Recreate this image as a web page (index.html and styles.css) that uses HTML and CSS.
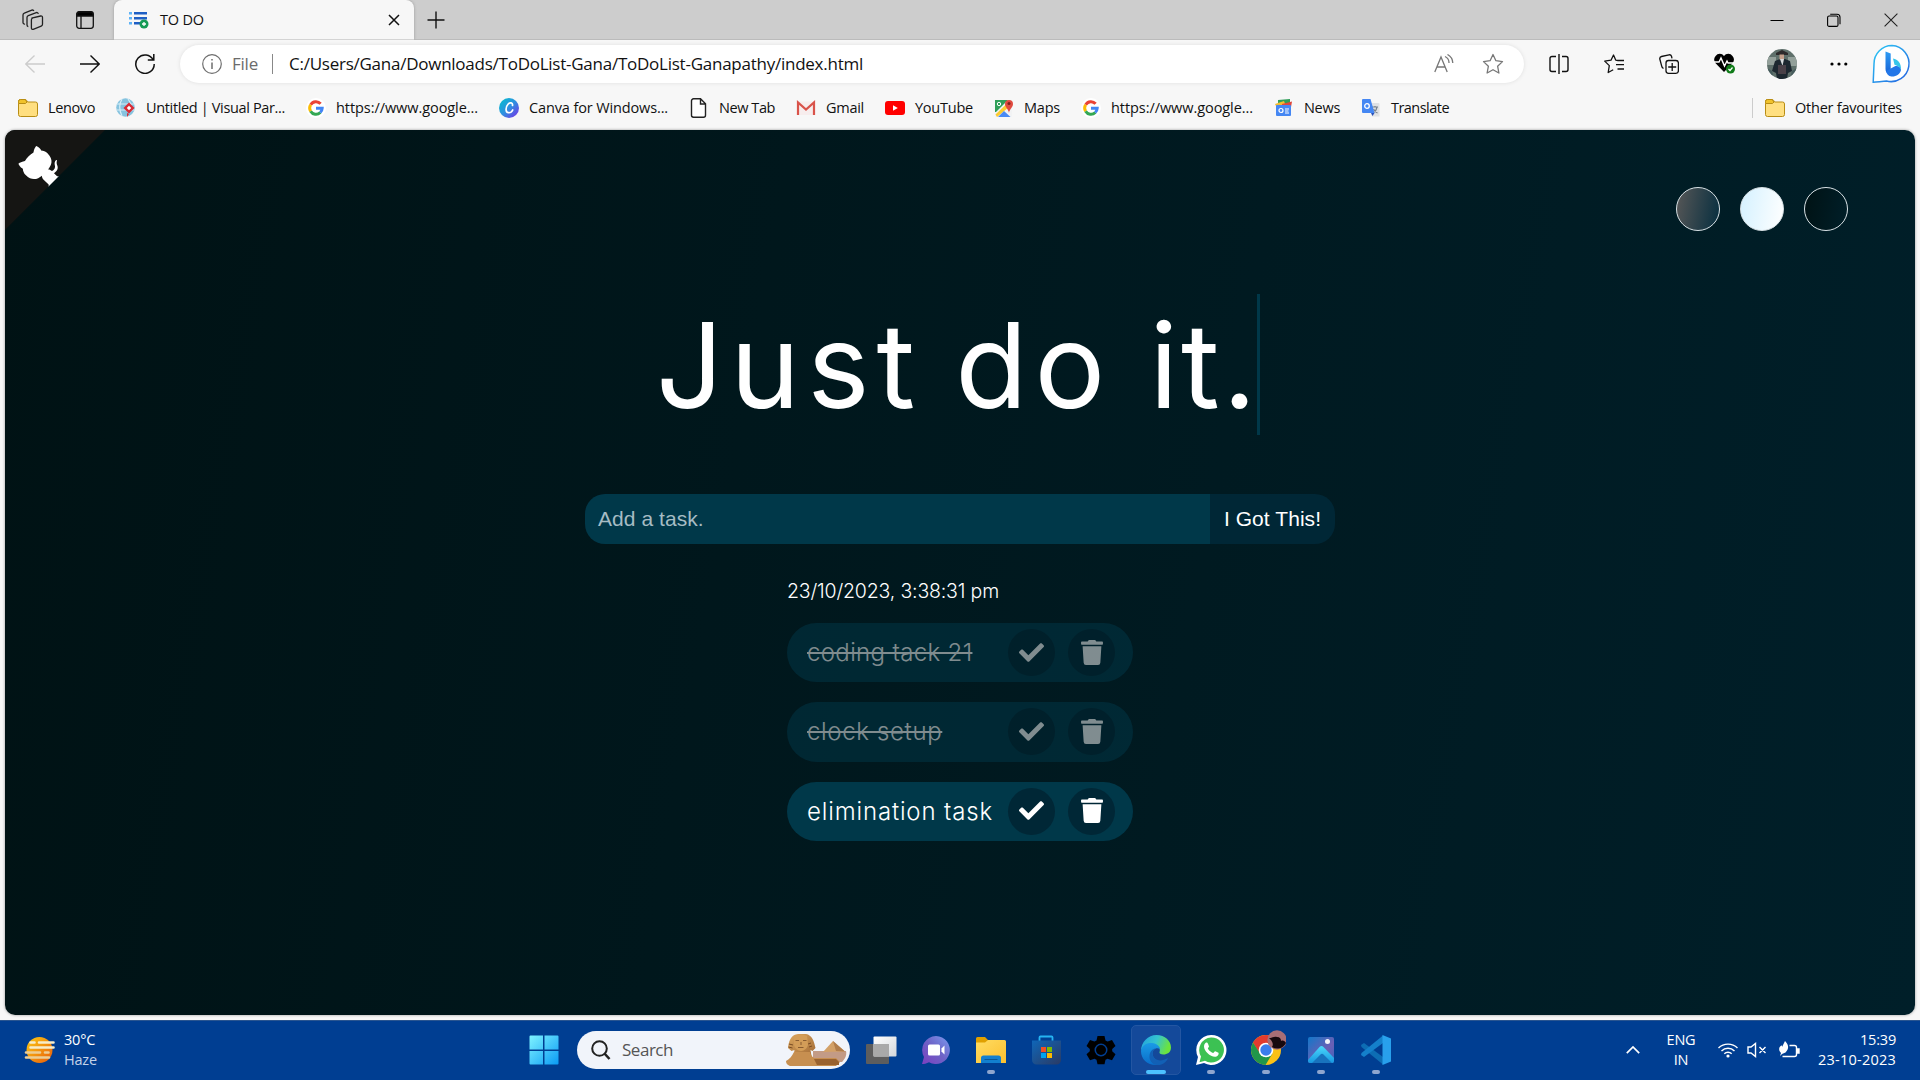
FILE: index.html
```html
<!DOCTYPE html>
<html lang="en">
<head>
<meta charset="utf-8">
<title>TO DO</title>
<link rel="stylesheet" href="styles.css">
</head>
<body>
<svg width="0" height="0" class="defs" aria-hidden="true">
  <defs>
    <linearGradient id="gWin" x1="0" y1="0" x2="1" y2="1"><stop offset="0" stop-color="#7ff3ff"/><stop offset="1" stop-color="#0a9bf5"/></linearGradient>
    <linearGradient id="gSun" x1="0" y1="0" x2="1" y2="1"><stop offset="0" stop-color="#fccb12"/><stop offset="1" stop-color="#e8590a"/></linearGradient>
    <linearGradient id="gCanva" x1="0" y1="0" x2="1" y2="1"><stop offset="0" stop-color="#00c4cc"/><stop offset=".5" stop-color="#2f8fe0"/><stop offset="1" stop-color="#7d2ae8"/></linearGradient>
    <linearGradient id="gBing" x1="0" y1="0" x2="1" y2="1"><stop offset="0" stop-color="#2ccbf5"/><stop offset="1" stop-color="#2460e0"/></linearGradient>
    <linearGradient id="gB" x1="0" y1="0" x2="0" y2="1"><stop offset="0" stop-color="#2f9cf4"/><stop offset="1" stop-color="#1763d6"/></linearGradient>
    <linearGradient id="gFold" x1="0" y1="0" x2="1" y2="1"><stop offset="0" stop-color="#ffdc62"/><stop offset="1" stop-color="#fcc02f"/></linearGradient>
    <linearGradient id="gStore" x1="0" y1="0" x2="1" y2="1"><stop offset="0" stop-color="#0f66b8"/><stop offset="1" stop-color="#2b3a63"/></linearGradient>
    <linearGradient id="gChat" x1="0" y1="1" x2="1" y2="0"><stop offset="0" stop-color="#7b3fc0"/><stop offset=".5" stop-color="#6d62c6"/><stop offset="1" stop-color="#7c9cf0"/></linearGradient>
    <linearGradient id="gEdge" x1="0" y1="0" x2="1" y2=".3"><stop offset="0" stop-color="#1f9fe0"/><stop offset=".55" stop-color="#35c4cf"/><stop offset="1" stop-color="#6be33e"/></linearGradient>
    <linearGradient id="gEdge2" x1="0" y1="0" x2="0" y2="1"><stop offset="0" stop-color="#1a9be6"/><stop offset="1" stop-color="#0a6cc9"/></linearGradient>
    <linearGradient id="gPhoto" x1="0" y1="0" x2="1" y2="1"><stop offset="0" stop-color="#1277c9"/><stop offset=".6" stop-color="#6a5fb5"/><stop offset="1" stop-color="#3c63bd"/></linearGradient>
    <linearGradient id="gHill" x1="0" y1="0" x2="0" y2="1"><stop offset="0" stop-color="#4bd8fb"/><stop offset="1" stop-color="#1696e0"/></linearGradient>
    <linearGradient id="gSph" x1="0" y1="0" x2="1" y2="1"><stop offset="0" stop-color="#dba75f"/><stop offset="1" stop-color="#a26a35"/></linearGradient>
    <linearGradient id="gWhite" x1="0" y1="0" x2="1" y2="1"><stop offset="0" stop-color="#fff"/><stop offset="1" stop-color="#d2d6da"/></linearGradient>
    <symbol id="folder" viewBox="0 0 20 20"><path d="M.5 5.500v-2a2 2 0 0 1 2-2h4.500a2 2 0 0 1 1.800 1.200L9.500 4H17.500a2 2 0 0 1 2 2v10.500a2 2 0 0 1-2 2h-15a2 2 0 0 1-2-2z" fill="#ffdf80" stroke="#b88d14"/><path d="M.5 4.500v-1a2 2 0 0 1 2-2H7l2 2.500-1.500 1.500H.6z" fill="#f0c22b" stroke="#b88d14"/></symbol>
    <symbol id="google" viewBox="0 0 20 20"><circle cx="10" cy="10" r="10" fill="#fff"/><g fill="none" stroke-width="3"><path d="M4.700 6.700A6.200 6.200 0 0 1 14.600 5.800" stroke="#ea4335"/><path d="M4.600 13.200a6.200 6.200 0 0 1 0-6.400" stroke="#fbbc05"/><path d="M14.300 14.500A6.200 6.200 0 0 1 4.600 13.200" stroke="#34a853"/><path d="M10 10.200h6.200a6.200 6.200 0 0 1-2 4.300" stroke="#4285f4"/></g></symbol>
    <symbol id="check" viewBox="0 0 512 512"><path fill="#fff" d="M173.898 439.404l-166.400-166.400c-9.997-9.997-9.997-26.206 0-36.204l36.203-36.204c9.997-9.998 26.207-9.998 36.204 0L192 312.690 432.095 72.596c9.997-9.997 26.207-9.997 36.204 0l36.203 36.204c9.997 9.997 9.997 26.206 0 36.204l-294.400 294.401c-9.998 9.997-26.207 9.997-36.204-.001z"/></symbol>
    <symbol id="trash" viewBox="0 0 448 512"><path fill="#fff" d="M432 32H312l-9.400-18.700A24 24 0 0 0 281.100 0H166.800a23.720 23.720 0 0 0-21.400 13.300L136 32H16A16 16 0 0 0 0 48v32a16 16 0 0 0 16 16h416a16 16 0 0 0 16-16V48a16 16 0 0 0-16-16zM53.200 467a48 48 0 0 0 47.900 45h245.800a48 48 0 0 0 47.900-45L416 128H32z"/></symbol>
  </defs>
</svg>

<div class="screen">
  <header class="tabstrip">
    <svg class="workspaces" width="22" height="22" viewBox="0 0 22 22" fill="none" stroke="#222" stroke-width="1.300"><path d="M9.500 9.200l9.200-2.200a1.500 1.500 0 0 1 1.800 1.500v6.800a2 2 0 0 1-1.300 1.800l-8 3.200a1.300 1.300 0 0 1-1.800-1.200v-8a2 2 0 0 1 .9-1.900z"/><path d="M6.300 17.600a1.500 1.500 0 0 1-1.300-1.500V8.500a2 2 0 0 1 1.300-1.900l8-3a1.500 1.500 0 0 1 2 1.200"/><path d="M3 15a1.500 1.500 0 0 1-2-1.400V6a2 2 0 0 1 1.300-1.900l7.500-3a1.500 1.500 0 0 1 2 .9"/></svg>
    <svg class="tabmenu" width="18" height="18" viewBox="0 0 18 18" fill="none" stroke="#111" stroke-width="1.300"><rect x=".7" y=".7" width="16.600" height="16.600" rx="2.500"/><path d="M1 3a2.300 2.300 0 0 1 2-2h12a2.300 2.300 0 0 1 2 2v2H1z" fill="#000"/><path d="M5 5v12"/></svg>
    <div class="tab">
      <svg width="20" height="18" viewBox="0 0 20 18"><g fill="#1f5fc4"><rect x="5" y="1" width="13" height="2.500"/><rect x="5" y="6" width="13" height="2.500"/><rect x="5" y="11" width="7" height="2.500"/></g><g fill="#5cb2f7"><rect x="0" y="1" width="3" height="2.500"/><rect x="0" y="6" width="3" height="2.500"/><rect x="0" y="11" width="3" height="2.500"/></g><circle cx="15" cy="13" r="4.500" fill="#169b56"/><path d="M15 11v4M13 13h4" stroke="#fff" stroke-width="1.300"/></svg>
      <span class="tab-title">TO DO</span>
      <svg class="tab-close" width="12" height="12" viewBox="0 0 12 12" stroke="#111" stroke-width="1.500"><path d="M1 1l10 10M11 1L1 11"/></svg>
    </div>
    <svg class="newtab" width="18" height="18" viewBox="0 0 18 18" stroke="#111" stroke-width="1.400"><path d="M9 .5v17M.5 9h17"/></svg>
    <div class="winctl">
      <svg width="14" height="14" viewBox="0 0 14 14" stroke="#000"><path d="M.5 7.500h13"/></svg>
      <svg width="14" height="14" viewBox="0 0 14 14" fill="none" stroke="#000" stroke-width="1.100"><rect x=".6" y="3" width="10.400" height="10.400" rx="1.500"/><path d="M3.200 1.200h6.800a3 3 0 0 1 3 3v7"/></svg>
      <svg width="14" height="14" viewBox="0 0 14 14" stroke="#222" stroke-width="1.100"><path d="M.6.6l12.800 12.800M13.400.6L.6 13.400"/></svg>
    </div>
  </header>

  <div class="toolbar">
    <svg class="nav" width="20" height="20" viewBox="0 0 20 20" fill="none" stroke="#ccc" stroke-width="1.300"><path d="M20 10H.8M9.500 1.500L.8 10l8.700 8.500"/></svg>
    <svg class="nav" width="20" height="20" viewBox="0 0 20 20" fill="none" stroke="#111" stroke-width="1.400"><path d="M0 10h19.200M10.500 1.500l8.700 8.500-8.700 8.500"/></svg>
    <svg class="nav" width="20" height="20" viewBox="0 0 20 20" fill="none" stroke="#111" stroke-width="1.500"><path d="M18.200 6A9.200 9.200 0 1 0 19.200 10M18.800 0v6h-6"/></svg>
    <div class="address">
      <svg width="20" height="20" viewBox="0 0 20 20" fill="none" stroke="#6e6e6e" stroke-width="1.200"><circle cx="10" cy="10" r="9.300"/><path d="M10 8.500v6.500M10 5v1.600" stroke-width="1.500"/></svg>
      <span class="file">File</span>
      <i class="bar"></i>
      <span class="url">C:/Users/Gana/Downloads/ToDoList-Gana/ToDoList-Ganapathy/index.html</span>
      <svg class="aloud" width="20" height="20" viewBox="0 0 20 20" fill="none" stroke="#777" stroke-width="1.300"><path d="M.8 18L7 3l6.200 15M3 13h8"/><path d="M11 2.500a7 7 0 0 1 4 6.500M13.500.5A10 10 0 0 1 18.800 9"/></svg>
      <svg class="star" width="22" height="22" viewBox="0 0 22 22" fill="none" stroke="#777" stroke-width="1.300" stroke-linejoin="round"><path d="M11 1.500l2.900 6.200 6.600.9-4.900 4.600 1.300 6.800L11 16.700 5.100 20l1.300-6.800L1.500 8.600l6.600-.9z"/></svg>
    </div>
    <div class="actions">
      <svg width="20" height="20" viewBox="0 0 20 20" fill="none" stroke="#111" stroke-width="1.400"><path d="M7 2.500H3a2 2 0 0 0-2 2v11a2 2 0 0 0 2 2h4M13 2.500h4a2 2 0 0 1 2 2v11a2 2 0 0 1-2 2h-4M10 0v20"/></svg>
      <svg width="20" height="20" viewBox="0 0 20 20" fill="none" stroke="#111" stroke-width="1.300" stroke-linejoin="round"><path d="M14 6.500l-2.300-.4L9.500 1 7 6.200l-6.300.9 4.600 4.500L4.200 18.500l5-2.700M13.500 6.500H20M12 10.700h8M13.500 15H20"/></svg>
      <svg width="20" height="20" viewBox="0 0 20 20" fill="none" stroke="#111" stroke-width="1.300"><rect x="7" y="6.500" width="12.400" height="12.800" rx="2.500"/><path d="M13.200 9v8M9.200 13h8M4.500 14.500a3 3 0 0 1-1.800-2.300L.8 5a2.200 2.200 0 0 1 1.700-2.500L10 .8a2.200 2.200 0 0 1 2.500 1.500l.5 2"/></svg>
      <svg width="21" height="21" viewBox="0 0 21 21"><path d="M10 19L1.600 10.200a5.300 5.300 0 0 1 0-7.300A5.200 5.200 0 0 1 10 3a5.200 5.200 0 0 1 8.500-.1 5.300 5.300 0 0 1 0 7.300z" fill="#000"/><path d="M0 9h5l2-4 3.500 8 2.500-5 1 2h6" fill="none" stroke="#fff" stroke-width="1.400"/><circle cx="16.500" cy="16" r="4.500" fill="#0f7b18"/><path d="M14.500 16l1.500 1.500 2.500-3" fill="none" stroke="#fff" stroke-width="1.200"/></svg>
      <svg class="avatar" width="30" height="30" viewBox="0 0 30 30"><clipPath id="av"><circle cx="15" cy="15" r="15"/></clipPath><g clip-path="url(#av)"><path fill="#5f706b" d="M0 0h30v30H0z"/><path fill="#93a09a" d="M0 8h9v8H0zM21 8h9v9h-9z"/><path fill="#1d2830" d="M8 12l5-2h5l5 2 2 10-4 2-1 6H10l-1-6-4-2z"/><path fill="#2c2a2b" d="M9 4l6-3 6 3v2H9z"/><path fill="#c3a08c" d="M12.500 5.500h4.500v5h-4.500z"/><path fill="#d6dadb" d="M13 10h4l-1.500 7z"/><path fill="#4a4148" d="M11 16h8v9h-8z"/><path fill="#465c5d" d="M0 19l5 3 2 8H0zM30 19l-5 3-2 8h7z"/></g></svg>
      <svg class="dots" width="18" height="4" viewBox="0 0 18 4"><circle cx="2" cy="2" r="1.600"/><circle cx="9" cy="2" r="1.600"/><circle cx="15.800" cy="2" r="1.600"/></svg>
      <svg class="bing" width="40" height="40" viewBox="0 0 40 40"><path d="M20 1.600A18 18 0 1 1 14.500 37C11 37.400 5 37.800 1.200 38.200L2 20A18 18 0 0 1 20 1.600z" fill="#fff" stroke="url(#gBing)" stroke-width="1.500"/><path d="M13.500 7.500l5.200 2v15.500l-2.200 4.500c-2-.5-3-2-3-4.500z" fill="url(#gB)"/><path d="M14 27l8.500-4.500c3-1.200 6.500.5 6.500 3.500-.5 4-5.500 7-9.500 6.500-3-.3-5-2.500-5.500-5.500z" fill="#2377e8"/><path d="M21 14.500c5 1 8.300 4.500 8 11-1.500-3.500-5-4-6.500-4.800z" fill="#37c6ea"/></svg>
    </div>
  </div>

  <nav class="bookmarks">
    <a class="b-lenovo"><svg width="20" height="20"><use href="#folder"/></svg><span>Lenovo</span></a>
    <a class="b-visual"><svg width="20" height="20" viewBox="0 0 20 20"><circle cx="9.500" cy="9.500" r="9.300" fill="#86c3df"/><path d="M1 6h17M1 12h17M6 1c-3 5-3 11 0 17M12 1c3 4 4 8 3 12" stroke="#d7eef7" fill="none" stroke-width="1.200"/><path d="M13 4.500l5.500 5.500L13 15.500 7.500 10z" fill="#d92b35"/><path d="M13 7.800l2.200 2.200-2.200 2.200-2.200-2.200z" fill="#fff"/><path d="M11 19v-4l2 1" fill="#d92b35"/></svg><span>Untitled | Visual Par...</span></a>
    <a class="b-google"><svg width="20" height="20"><use href="#google"/></svg><span>https://www.google...</span></a>
    <a class="b-canva"><svg width="20" height="20" viewBox="0 0 20 20"><circle cx="10" cy="10" r="10" fill="url(#gCanva)"/><path d="M13.500 7.500c.5-3-2.500-3.500-4.500-1.200-2.500 2.800-2.800 8 .5 8.400 1.800.2 3.500-1.200 4.200-2.700" fill="none" stroke="#fff" stroke-width="1.700" stroke-linecap="round"/></svg><span>Canva for Windows...</span></a>
    <a class="b-newtab"><svg width="20" height="20" viewBox="0 0 20 20" fill="#fff" stroke="#222" stroke-width="1.400"><path d="M4.500.8h7l5 5v11.400a2 2 0 0 1-2 2h-10a2 2 0 0 1-2-2V2.800a2 2 0 0 1 2-2zM11.500 1v5h5"/></svg><span>New Tab</span></a>
    <a class="b-gmail"><svg width="20" height="20" viewBox="0 0 20 20"><path d="M1 3.500h18V17H1z" fill="#f7eded"/><path d="M2 17V4.500l8 7 8-7V17" fill="none" stroke="#d9534a" stroke-width="2.200"/></svg><span>Gmail</span></a>
    <a class="b-youtube"><svg width="20" height="20" viewBox="0 0 20 20"><rect y="3" width="20" height="14" rx="3" fill="#f00"/><path d="M8 7.300v5.400l4.800-2.700z" fill="#fff"/></svg><span>YouTube</span></a>
    <a class="b-maps"><svg width="20" height="20" viewBox="0 0 20 20"><rect x="1" y="2" width="17" height="17" rx="1.500" fill="#f2f3f4"/><path d="M1 2h13L2 14H1z" fill="#2f9e58"/><path d="M1.500 16.500L15 3.500l3 3L3 19z" fill="#fccb30"/><path d="M4 19l6-6 6.500 6z" fill="#4a8af4"/><path d="M15 15c-.5-4-4-5.500-4-9a4 4 0 0 1 8 0c0 3.500-3.500 5-4 9z" fill="#e04a3f"/><circle cx="15" cy="5.500" r="1.500" fill="#7d211b"/><circle cx="5" cy="6" r="1.700" fill="none" stroke="#fff"/></svg><span>Maps</span></a>
    <a class="b-google"><svg width="20" height="20"><use href="#google"/></svg><span>https://www.google...</span></a>
    <a class="b-news"><svg width="20" height="20" viewBox="0 0 20 20"><path d="M4 2l12-1v6H4z" fill="#2f9e58"/><path d="M1 6l9-3 2 5H2z" fill="#f4bc30"/><path d="M8 6l10-2.500L17 9H8z" fill="#e0483c"/><rect x="2" y="7" width="15" height="11" rx="1" fill="#4587f3"/><circle cx="7" cy="12.500" r="2" fill="none" stroke="#fff" stroke-width="1.200"/><path d="M11 11h4M11 13h3.500M11 15h4" stroke="#fff"/></svg><span>News</span></a>
    <a class="b-translate"><svg width="20" height="20" viewBox="0 0 20 20"><path d="M8 5h9.500a1 1 0 0 1 1 1v12.500H11z" fill="#dfe1e4"/><path d="M11 9h6M14 8v1.500M12 15c2-1 3.500-3 4-6M12.500 11c1 2 2.500 3.500 4 4" stroke="#76818b" fill="none" stroke-width="1.200"/><path d="M2 1h7.500l4 14H2a1 1 0 0 1-1-1V2a1 1 0 0 1 1-1z" fill="#4587f3"/><circle cx="6" cy="8" r="2.300" fill="none" stroke="#fff" stroke-width="1.300"/><path d="M10 15h3.500L11.500 18z" fill="#2850b8"/></svg><span>Translate</span></a>
    <a class="other"><svg width="20" height="20"><use href="#folder"/></svg><span>Other favourites</span></a>
  </nav>

  <main class="page">
    <svg class="corner" width="100" height="100" viewBox="0 0 250 250"><path fill="#151513" d="M0,0 L115,115 L130,115 L142,142 L250,250 L250,0 Z"/><path fill="#fff" d="M128.300,109.000 C113.800,99.700 119.000,89.600 119.000,89.600 C122.000,82.700 120.500,78.600 120.500,78.600 C119.200,72.000 123.400,76.300 123.400,76.300 C127.300,80.900 125.500,87.300 125.500,87.300 C122.900,97.600 130.600,101.900 134.400,103.200"/><path fill="#fff" d="M115.000,115.000 C114.900,115.100 118.700,116.500 119.800,115.400 L133.700,101.600 C136.900,99.200 139.900,98.400 142.200,98.600 C133.800,88.000 127.500,74.400 143.800,58.000 C148.500,53.400 154.000,51.200 159.700,51.000 C160.300,49.400 163.200,43.600 171.400,40.100 C171.400,40.100 176.100,42.500 178.800,56.200 C183.100,58.600 187.200,61.800 190.900,65.400 C194.500,69.000 197.700,73.200 200.100,77.600 C213.800,80.200 216.300,84.900 216.300,84.900 C212.700,93.100 206.900,96.000 205.400,96.600 C205.100,102.400 203.000,107.800 198.300,112.500 C181.900,128.900 168.300,122.500 157.700,114.100 C157.900,116.900 156.700,120.900 152.700,124.900 L141.000,136.500 C139.800,137.700 141.600,141.900 141.800,141.800 Z"/></svg>
    <div class="themes"><i class="standard"></i><i class="light"></i><i class="darker"></i></div>
    <h1 class="title"><span class="wide">Just</span> <span class="wide second">do</span> <span class="narrow">it.</span></h1>
    <form class="entry"><span class="field">Add a task.</span><span class="submit">I Got This!</span></form>
    <section class="list">
      <p class="stamp">23/10/2023, 3:38:31 pm</p>
      <div class="todo done"><span class="name n1"><span>coding tack 21</span></span><b><svg width="25" height="25"><use href="#check"/></svg></b><b><svg width="22" height="25"><use href="#trash"/></svg></b></div>
      <div class="todo done"><span class="name n2"><span>clock setup</span></span><b><svg width="25" height="25"><use href="#check"/></svg></b><b><svg width="22" height="25"><use href="#trash"/></svg></b></div>
      <div class="todo"><span class="name n3"><span>elimination task</span></span><b><svg width="25" height="25"><use href="#check"/></svg></b><b><svg width="22" height="25"><use href="#trash"/></svg></b></div>
    </section>
  </main>

  <footer class="taskbar">
    <div class="weather">
      <svg width="32" height="28" viewBox="0 0 32 28"><circle cx="15.500" cy="14" r="13" fill="url(#gSun)"/><g stroke-width="2.600" stroke-linecap="round"><path d="M6.500 6.500h4M15 6.500h14.500M6.500 11.500h23" stroke="#f8edc8"/><path d="M2 16.500h14M21 16.500h3.500M2 21.500h23" stroke="#eccd94"/></g></svg>
      <div><span>30°C</span><span class="haze">Haze</span></div>
    </div>
    <div class="apps">
      <b><svg width="30" height="30" viewBox="0 0 30 30"><path fill="url(#gWin)" d="M1.500.5H14v14H.500v-13a1 1 0 0 1 1-1zM15.500.5h13a1 1 0 0 1 1 1v13h-14zM.5 16H14v13.500H1.500a1 1 0 0 1-1-1zM15.500 16h14v12.500a1 1 0 0 1-1 1h-13z"/></svg></b>
      <div class="search">
        <svg width="20" height="20" viewBox="0 0 20 20" fill="none" stroke="#222" stroke-width="2"><circle cx="8.500" cy="8.500" r="7.300"/><path d="M13.500 13.500l5 5.500" stroke-width="2.600"/></svg>
        <span>Search</span>
        <svg class="sphinx" width="62" height="34" viewBox="0 0 62 34"><path d="M28 18h33c1 4-1 8-4 11H28z" fill="#c39b86"/><path d="M38 19L48 8l12 10.500z" fill="#d3a168"/><path d="M48 8l12 10.500-9-.5z" fill="#b07d4c"/><path d="M3 15C4 5 8 1 14 1h7c6 1 8 7 9.500 14l-3 3-2-1 1 6h-18l1-6-3 1z" fill="url(#gSph)"/><path d="M9 3c3-2 10-2 13 0l1 8c0 4-4 7-7 7s-7-3-7-7z" fill="#d39d58"/><path d="M10.500 7.500h3.500M18 7.500h3.500M16 9v3M13 14.500h5.500" stroke="#8a5c30"/><path d="M4 11l4 1M3.500 14l4 1M26 10l-3 1M27 13l-3 1" stroke="#7a4d24"/><path d="M1 28c4-2 6-5 8-9h16c1 3 2 5 4 6h22l4 4-4 4H5c-3-1-4-3-4-5z" fill="#c78f50"/><path d="M29 26h22l3 3v3H32z" fill="#99622f"/></svg>
      </div>
      <b><svg width="32" height="32" viewBox="0 0 32 32"><rect x="1" y="10" width="23" height="20" rx="1" fill="#5d5d5d"/><rect x="8.500" y="2.500" width="23" height="20" rx="1" fill="url(#gWhite)"/><path d="M8.500 10H24v12.500H8.500z" fill="#a9a9a9"/></svg></b>
      <b><svg width="30" height="30" viewBox="0 0 30 30"><path d="M15 1a14 14 0 1 1-7 26.200C5.500 28.500 3 29 1 29l2-7A14 14 0 0 1 15 1z" fill="url(#gChat)"/><rect x="7" y="9.500" width="12" height="11" rx="1.500" fill="#fff"/><path d="M20.500 13.500l3-3v9l-3-3z" fill="#fff"/></svg></b>
      <b class="run"><svg width="30" height="28" viewBox="0 0 30 28"><path d="M0 6V2.500A1.500 1.500 0 0 1 1.500 1H9l3 3v4H0z" fill="#e0a000"/><path d="M0 6.500h9l3-2.500h16.500A1.500 1.500 0 0 1 30 5.500V27H0z" fill="url(#gFold)"/><path d="M5 27v-5a2.500 2.500 0 0 1 2.500-2.500h15A2.500 2.500 0 0 1 25 22v5z" fill="#127fcf"/><path d="M8.500 23.500h13" stroke="#0a5796"/></svg></b>
      <b><svg width="30" height="30" viewBox="0 0 30 30"><path d="M8.500 7V2.500a1 1 0 0 1 1-1h11a1 1 0 0 1 1 1V7" fill="none" stroke="#25b3f2" stroke-width="1.800"/><path d="M1 5.500h29V25a4.500 4.500 0 0 1-4.500 4.500h-20A4.500 4.500 0 0 1 1 25z" fill="url(#gStore)"/><path d="M10 12h5v5h-5z" fill="#f25022"/><path d="M16 12h5v5h-5z" fill="#7fba00"/><path d="M10 18h5v5h-5z" fill="#00a4ef"/><path d="M16 18h5v5h-5z" fill="#ffb900"/></svg></b>
      <b><svg width="30" height="30" viewBox="0 0 30 30"><path fill-rule="evenodd" d="M11.500 1h7l1 4.500 2 1L26 5l3.500 6-3.300 3v2.200l3.300 3-3.500 6-4.500-1.500-2 1-1 4.500h-7l-1-4.500-2-1L4 25.200.5 19.200l3.300-3V14L.5 11 4 5l4.500 1.500 2-1zM15 8.500a6.500 6.500 0 1 0 0 13 6.500 6.500 0 0 0 0-13z"/><circle cx="15" cy="15" r="5"/></svg></b>
      <b class="run active"><svg width="32" height="32" viewBox="0 0 32 32"><path d="M1 17C1 8 8 1 16.500 1S31 7 31 13.500c0 5-4 7-7.500 7-3 0-4.500-1.200-4-2.500 1.300-2.500-.5-6.500-6-7.500C8 9.500 3 12 1 17z" fill="url(#gEdge)"/><path d="M1 17c1-6 6-8.500 11-8 5 .5 8 3.500 8 6-4-2-8 1-7.500 5 .5 5 6 9.500 13.500 6-3 4-7 5-10 5C7 31 1 25 1 17z" fill="url(#gEdge2)"/><path d="M12.500 19.500c.5 6 7 9.500 15.500 4.500-1 3.500-5 7-10 7-6 0-9-5-8.500-9 .2-4 2.500-7 6-7.500-2.500 1-3 3-3 5z" fill="#1260b5"/></svg></b>
      <b class="run"><svg width="32" height="32" viewBox="0 0 32 32"><path d="M16 1a15 15 0 1 1-7 28l-8 2 2-8A15 15 0 0 1 16 1z" fill="#fff"/><path d="M16 3.500a12.500 12.500 0 1 1-6 23.200l-5.500 1.500L6 22.500A12.500 12.500 0 0 1 16 3.500z" fill="#3cc153"/><path d="M10 9.500c1-1.500 2.500-1 3 .3l1 2.700c-.3 1-1.500 1.500-1 2.300 1 2 3 3.500 5 4.200 1-.2 1.500-2 2.300-1.800l3.200 1.600c.5 1-.2 3.200-2 3.700-5 1.500-12.500-5-12.500-10 0-1.200.3-2.200 1-3z" fill="#fff"/></svg></b>
      <b class="run"><svg width="40" height="40" viewBox="0 0 40 40"><circle cx="20" cy="20" r="15" fill="#fbc116"/><path d="M7 12.500A15 15 0 0 1 33 12.500L20 13.500l-6.500 10z" fill="#e33b2e"/><path d="M7 12.500A15 15 0 0 0 19.500 35l7-11.500L14 23.500z" fill="#21964a"/><circle cx="20" cy="20" r="7.300" fill="#fff"/><circle cx="20" cy="20" r="5.700" fill="#3b7ded"/><circle cx="31" cy="10" r="9.700" fill="#a86e76"/><path d="M23 8c3 0 5-2 8-1 3 0 4 2 4 4 2-1 4 0 5 2a9.700 9.700 0 0 1-14 4c2-3 0-6-3-9z" fill="#17090f"/></svg></b>
      <b class="run"><svg width="28" height="28" viewBox="0 0 28 28"><rect x="1" y="1" width="26" height="26" rx="2" fill="url(#gPhoto)"/><path d="M1 24l11.500-13a3 3 0 0 1 4 0L27 22v3a2 2 0 0 1-2 2H3a2 2 0 0 1-2-2z" fill="url(#gHill)"/><path d="M5 27l8.500-8.500a2 2 0 0 1 3 0L25 27z" fill="#1873be"/><circle cx="20.500" cy="5.500" r="2.500" fill="#f2f4fa"/></svg></b>
      <b class="run"><svg width="32" height="32" viewBox="0 0 32 32"><path d="M1 11l3-2 19 14v7.500L1.500 13z" fill="#0d6db4"/><path d="M1 21l3 2L23 9V1.500L1.500 19z" fill="#1480cb"/><path d="M22.500 1L31 4.500v23L22.500 31z" fill="#28a0ec"/></svg></b>
    </div>
    <div class="tray">
      <svg class="chev" width="14" height="8" viewBox="0 0 14 8" fill="none" stroke="#fff" stroke-width="1.700"><path d="M.8 7.200L7 1l6.200 6.200"/></svg>
      <div class="lang"><span>ENG</span><span>IN</span></div>
      <svg width="20" height="16" viewBox="0 0 20 16" fill="none" stroke="#fff" stroke-width="1.400"><path d="M.5 6a13.500 13.500 0 0 1 19 0M3.500 9a9.200 9.200 0 0 1 13 0M6.300 11.800a5.200 5.200 0 0 1 7.400 0"/><circle cx="10" cy="14" r="1.600" fill="#fff" stroke="none"/></svg>
      <svg class="mute" width="20" height="16" viewBox="0 0 20 16" fill="none" stroke="#fff" stroke-width="1.400"><path d="M1 5h3L8.500 1.500v13L4 11H1zM12.500 5l6 6M18.500 5l-6 6"/></svg>
      <svg class="batt" width="22" height="18" viewBox="0 0 22 18" fill="none" stroke="#fff" stroke-width="1.400"><path d="M11.500 4.500h5A2 2 0 0 1 18.500 6.500v7a2 2 0 0 1-2 2h-12"/><path d="M19.500 8h1.500v4h-1.500z" fill="#fff"/><path d="M7 0c3 3 5 7 .5 11.500L4 13l-2 2 1-3C0 9 1 5 4 4.500V6z" fill="#fff" stroke="none"/></svg>
      <div class="clock"><span>15:39</span><span class="date">23-10-2023</span></div>
    </div>
  </footer>
</div>
</body>
</html>
```
FILE: styles.css
```css
* { box-sizing: border-box; }
body { margin: 0; overflow: hidden; font-family: "Open Sans", "Noto Sans", sans-serif; white-space: nowrap; }
.defs { position: absolute; }
svg { display: block; flex: none; }
.screen { display: flex; flex-direction: column; width: 1920px; height: 1080px; background: #f7f7f7; }

/* browser chrome */
.tabstrip { display: flex; align-items: center; height: 40px; background: #cdcdcd; border-bottom: 1px solid #bbb; }
.workspaces { margin-left: 22px; }
.tabmenu { margin-left: 32px; }
.tab { display: flex; align-items: center; width: 300px; height: 40px; margin: 0 13px 0 20px; padding: 0 14px 0 15px; background: #f7f7f7; border-radius: 8px 8px 0 0; box-shadow: 0 0 3px #999; clip-path: inset(0 -3px 0 -3px); }
.tab-title { margin-left: 11px; font-size: 14.500px; letter-spacing: -.17px; color: #111; }
.tab-close { margin-left: auto; }
.winctl { display: flex; gap: 43px; margin: 0 22px 0 auto; }

.toolbar { display: flex; align-items: center; height: 47px; padding: 0 8px 0 25px; }
.nav { margin-right: 35px; }
.address { display: flex; align-items: center; width: 1346px; height: 38px; margin-left: -10px; padding: 0 20px 0 22px; background: #fff; border-radius: 19px; box-shadow: 0 0 4px rgba(0,0,0,.1); }
.file { margin-left: 10px; font-size: 17px; letter-spacing: -.23px; color: #6b6b6b; }
.bar { width: 1px; height: 20px; margin: 0 16px 0 14px; background: #888; }
.url { font-size: 17px; letter-spacing: -.248px; color: #111; }
.aloud { margin-left: auto; }
.star { margin-left: 28px; }
.actions { display: flex; align-items: center; gap: 35px; margin-left: 25px; }
.avatar { margin-left: -3px; }
.dots { margin-left: -2px; }
.bing { margin-left: -11px; }

.bookmarks { display: flex; align-items: center; gap: 21px; height: 43px; padding: 0 18px 1px; font-size: 14.500px; color: #111; }
.bookmarks a { display: flex; align-items: center; gap: 10px; }
.bookmarks span { padding-bottom: 1px; }
.bookmarks .other { margin-left: auto; padding-left: 12px; border-left: 1px solid #ccc; letter-spacing: -.236px; }
.b-lenovo { letter-spacing: -.383px; }
.b-visual { letter-spacing: -.348px; }
.b-google { letter-spacing: -.067px; }
.b-canva { letter-spacing: -.128px; }
.b-newtab { letter-spacing: -.426px; }
.b-gmail { letter-spacing: -.272px; }
.b-youtube { letter-spacing: -.232px; }
.b-maps { letter-spacing: -.223px; }
.b-news { letter-spacing: -.305px; }
.b-translate { letter-spacing: -.535px; }

/* to-do page */
.page { position: relative; display: flex; flex-direction: column; align-items: center; height: 885px; margin: 0 5px; overflow: hidden; border-radius: 10px; background: linear-gradient(100deg, #001214, #001f29); box-shadow: 0 0 3px rgba(0,0,0,.4); color: #fff; font-family: Inter, sans-serif; }
.corner { position: absolute; left: 0; top: 0; transform: scaleX(-1); }
.themes { display: flex; align-self: flex-end; gap: 20px; margin: 57px 67px 0 0; }
.themes i { width: 44px; height: 44px; border: 1px solid #d9e2e6; border-radius: 50%; }
.standard { background: linear-gradient(100deg, #575757, #062e3f); }
.light { background: linear-gradient(100deg, #d4f1ff, #fff); }
.darker { background: linear-gradient(100deg, #001214, #001f29); }
.title { width: 600px; height: 141px; margin: 63px 0 0; border-right: 3px solid #003849; font-size: 118px; font-weight: 400; line-height: 143px; text-indent: -4px; }
.wide { letter-spacing: 7px; }
.second { margin-right: 4px; }
.narrow { letter-spacing: 3px; }
.entry { display: flex; width: 750px; height: 50px; margin: 59px 0 0; border-radius: 20px; overflow: hidden; font: 21px/50px "Liberation Sans", sans-serif; letter-spacing: .06px; }
.field { width: 625px; padding-left: 13px; background: #003849; color: #a6bcc4; }
.submit { flex: 1; background: #002736; text-align: center; }
.list { width: 346px; }
.stamp { height: 60px; margin: 19px 0 0; font-size: 19.500px; font-weight: 300; letter-spacing: -.169px; line-height: 57px; }
.todo { display: flex; align-items: center; height: 59.200px; margin-bottom: 20.200px; padding: 0 18px 0 20px; border-radius: 30px; background: #003849; font-size: 24px; font-weight: 300; }
.todo b { display: flex; align-items: center; justify-content: center; width: 47px; height: 47px; padding-bottom: 1px; border-radius: 50%; background: #002736; }
.todo b + b { margin-left: 13px; }
.name { flex: none; width: 201px; }
.n1 { letter-spacing: .35px; }
.n2 { letter-spacing: .65px; }
.n3 { letter-spacing: .85px; }
.done { opacity: .5; }
.done .name span { text-decoration: line-through 2px; }

/* taskbar */
.taskbar { display: flex; height: 60px; margin-top: 5px; padding-bottom: 1px; background: #003e92; border-top: 1px solid #2a5590; color: #fff; font-size: 14.500px; line-height: 20px; letter-spacing: -.2px; }
.weather { display: flex; align-items: center; width: 519px; padding-left: 24px; gap: 8px; }
.weather div { display: flex; flex-direction: column; align-items: flex-start; padding-bottom: 1px; }
.haze { color: #c3d2e8; }
.apps { display: flex; align-items: center; gap: 5px; }
.apps b { position: relative; display: flex; align-items: center; justify-content: center; width: 50px; height: 50px; border-radius: 5px; }
.search { display: flex; align-items: center; width: 273px; height: 38px; margin: 0 1px 0 3px; padding: 0 3px 0 14px; border-radius: 19px; background: #f1f4fa; color: #555; font-size: 17px; letter-spacing: -.474px; }
.search span { margin-left: 11px; }
.sphinx { margin-left: auto; }
.run::after { content: ""; position: absolute; bottom: 1px; left: 21px; width: 8px; height: 4px; border-radius: 2px; background: #8ea6cf; }
.apps .active { background: #14499a; border: 1px solid #2356a2; }
.active::after { left: 14px; bottom: 0; width: 20px; background: #4cc2ff; }
.tray { display: flex; align-items: center; margin-left: auto; padding-right: 24px; }
.lang { display: flex; flex-direction: column; align-items: center; width: 50px; margin: 0 12px 0 16px; padding-bottom: 1px; }
.mute { margin-left: 9px; }
.batt { margin-left: 11px; }
.clock { display: flex; flex-direction: column; align-items: flex-end; width: 96px; padding-bottom: 1px; }
.date { letter-spacing: .233px; }
```
